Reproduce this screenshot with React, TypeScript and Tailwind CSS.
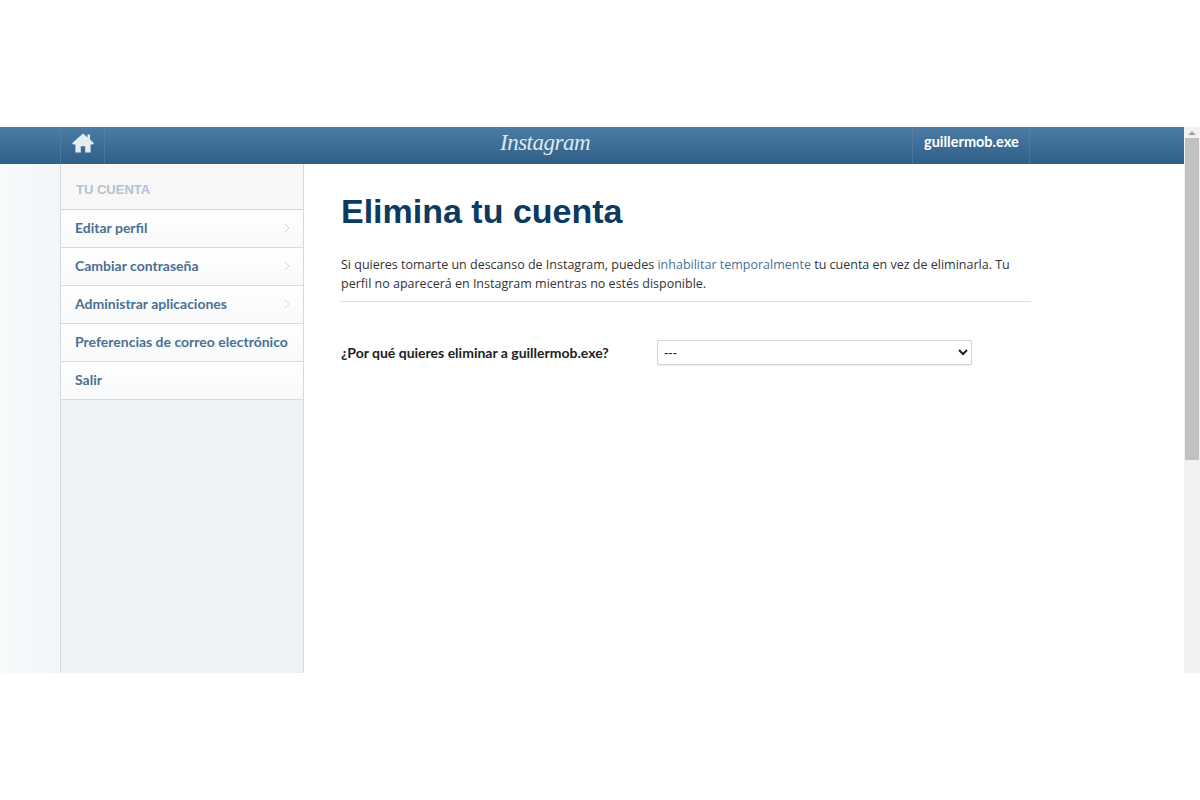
import { ChevronRight } from 'lucide-react';

const MENU = [
  { label: 'Editar perfil', arrow: true },
  { label: 'Cambiar contraseña', arrow: true },
  { label: 'Administrar aplicaciones', arrow: true },
  { label: 'Preferencias de correo electrónico', arrow: false },
  { label: 'Salir', arrow: false },
];

function HomeIcon() {
  return (
    <svg width="22" height="20" viewBox="0 0 22 20" className="text-[#e4ebf1]">
      <path
        fill="currentColor"
        d="M11 0.5 L15.5 4.4 V1.5 H18 V6.6 L22 10.2 L20.4 11.6 H18.6 V19.5 H13.2 V13.2 H8.8 V19.5 H3.4 V11.6 H1.6 L0 10.2 Z"
      />
    </svg>
  );
}

export default function App() {
  return (
    <div className="h-[800px] bg-white pt-[127px] font-['Open_Sans',sans-serif] overflow-hidden">
      <div className="flex h-[546px]">
        <div className="flex-1 min-w-0 flex flex-col">
          {/* Top bar */}
          <header className="h-[37px] shrink-0 bg-gradient-to-b from-[#4c7ca4] to-[#2f5f88]">
            <div className="ml-[60px] w-[970px] h-full grid grid-cols-[1fr_auto_1fr] items-center">
              <div className="justify-self-start w-[45px] h-full flex items-center justify-center pb-[6px] border-x border-[#5a86aa]/50">
                <HomeIcon />
              </div>
              <div className="font-['Liberation_Serif',serif] italic text-[23px] leading-none text-[#dfe8ef] pb-[6px] tracking-[-0.5px]">Instagram</div>
              <div className="justify-self-end w-[118px] h-full flex items-center pl-[11px] pb-[7px] border-x border-[#5a86aa]/50 font-['Lato',sans-serif] font-bold text-[14.5px] text-white">
                guillermob.exe
              </div>
            </div>
          </header>

          <div className="flex-1 min-h-0 flex bg-white">
            <div className="w-[60px] shrink-0 bg-gradient-to-r from-[#f8fafb] to-[#f3f6f9]" />

            {/* Sidebar */}
            <aside className="w-[244px] shrink-0 flex flex-col bg-[#eef2f5] border-x border-[#cfdbe5] font-['Lato',sans-serif]">
              <div className="h-[46px] shrink-0 flex items-center pl-[15px] pt-[6px] bg-[#f7f7f7] border-b border-[#ccd5dd] font-['Liberation_Sans',sans-serif] font-bold text-[13px] text-[#b5c2cf]">
                TU CUENTA
              </div>
              <nav className="shrink-0">
                {MENU.map((item) => (
                  <div
                    key={item.label}
                    className="h-[38px] flex items-center justify-between pl-[14px] pr-[8px] pb-[2px] bg-gradient-to-b from-white to-[#f8f9fa] border-b border-[#d5dde4] font-bold text-[14px] whitespace-nowrap text-[#4a7094]"
                  >
                    <span>{item.label}</span>
                    {item.arrow && <ChevronRight size={16} strokeWidth={1.5} className="text-[#d3d9df]" />}
                  </div>
                ))}
              </nav>
            </aside>

            {/* Main content */}
            <main className="w-[727px] shrink-0 pl-[36px] pt-[27px]">
              <h1 className="pl-px font-['Liberation_Sans',sans-serif] font-bold text-[34px] leading-[40px] text-[#0d3a60]">Elimina tu cuenta</h1>
              <p className="mt-[24px] pl-px pb-[8px] border-b border-[#dfdfdf] text-[12.5px] leading-[19px] text-[#333]">
                Si quieres tomarte un descanso de Instagram, puedes <span className="text-[#4a7094]">inhabilitar temporalmente</span> tu cuenta en vez de eliminarla. Tu<br />
                perfil no aparecerá en Instagram mientras no estés disponible.
              </p>
              <div className="mt-[38px] flex items-center">
                <label className="w-[317px] shrink-0 pl-px font-['Lato',sans-serif] font-bold text-[14px] text-[#222]">¿Por qué quieres eliminar a guillermob.exe?</label>
                <select className="w-[315px] h-[25px] pl-[2px] bg-white border border-[#d4d4d4] rounded-[2px] shadow-[0_1px_1px_rgba(0,0,0,0.08)] font-['Liberation_Sans',sans-serif] text-[13px] text-[#222]">
                  <option>---</option>
                </select>
              </div>
            </main>
          </div>
        </div>

        {/* Browser scrollbar */}
        <div className="w-4 shrink-0 flex flex-col items-center bg-[#f1f1f1]">
          <div className="h-[11px] shrink-0 flex items-center justify-center">
            <div className="w-0 h-0 border-x-[4px] border-x-transparent border-b-[4px] border-b-[#a3a3a3]" />
          </div>
          <div className="w-[14px] h-[322px] shrink-0 bg-[#c1c1c1]" />
        </div>
      </div>
    </div>
  );
}
